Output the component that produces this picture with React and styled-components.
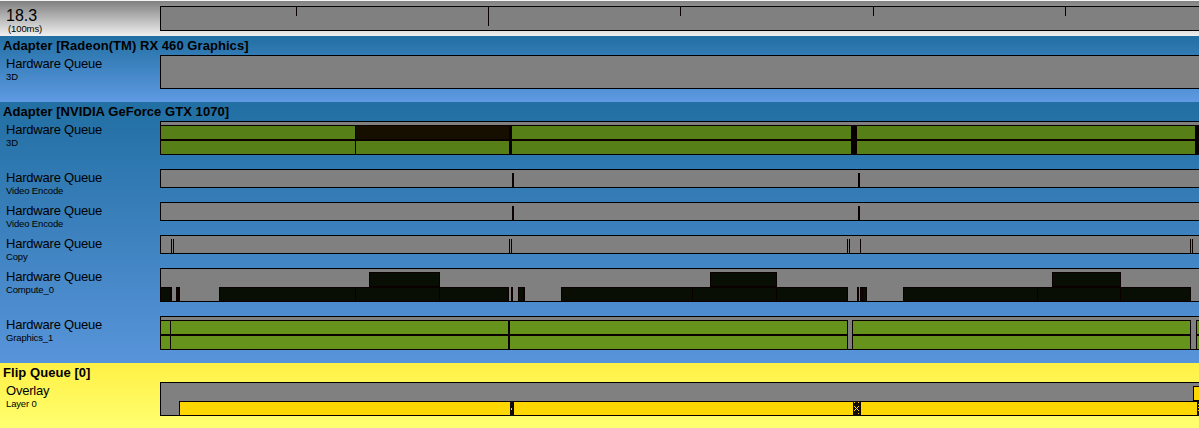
import React from "react";
import styled, { createGlobalStyle } from "styled-components";

const ORIGIN = 160;
const INK = "#0a0000";

const GlobalStyle = createGlobalStyle`
  * { box-sizing: border-box; }
  body {
    margin: 0;
    color: #000;
    font-family: "Liberation Sans", Arial, sans-serif;
    overflow: hidden;
  }
`;

const Viewer = styled.main`
  display: flex;
  flex-direction: column;
  width: 1199px;
  height: 428px;
  overflow: hidden;
`;

const Header = styled.header`
  display: flex;
  flex: none;
  height: 36px;
  padding-top: 5px;
  border-top: 1px solid #f4f4f4;
  background: linear-gradient(#808080, #f0f0f0);
`;

const HeaderLabel = styled.div`
  flex: none;
  width: ${ORIGIN}px;
  padding-left: 6px;
`;

const Time = styled.div`
  padding-top: 1px;
  font-size: 16px;
  line-height: 18px;
`;

const Scale = styled.div`
  margin-top: -1px;
  padding-left: 2px;
  font-size: 9.5px;
  line-height: 10px;
  letter-spacing: -0.1px;
`;

const Section = styled.section`
  flex: none;
  height: ${(p) => p.$height}px;
  overflow: hidden;
  background: ${(p) => p.$background};
`;

const SectionTitle = styled.h2`
  height: 19px;
  margin: 0;
  padding: 2px 0 0 3px;
  font-size: 13px;
  line-height: 15px;
  font-weight: bold;
  letter-spacing: 0.06px;
  white-space: nowrap;
`;

const Rows = styled.div`
  display: flex;
  flex-direction: column;
  gap: 14px;
`;

const Row = styled.div`
  display: flex;
  height: ${(p) => p.$height}px;
`;

const RowLabel = styled.div`
  flex: none;
  width: ${ORIGIN}px;
  padding-left: 6px;
  white-space: nowrap;
`;

const QueueName = styled.div`
  padding-top: 1px;
  font-size: 13px;
  line-height: 15px;
  letter-spacing: -0.21px;
`;

const EngineName = styled.div`
  font-size: 9.5px;
  line-height: 12px;
  letter-spacing: -0.15px;
`;

const Track = styled.div`
  display: flex;
  flex: 1;
  flex-direction: column;
  justify-content: ${(p) => (p.$ruler ? "flex-start" : "flex-end")};
  height: ${(p) => (p.$ruler ? "25px" : "100%")};
  min-width: 0;
  overflow: hidden;
  background: #808080;
  box-shadow: inset 1px 0 #000, inset 0 1px #000, inset 0 -1px #000;
`;

const Lane = styled.div`
  display: flex;
  flex: none;
  height: ${(p) => p.$height || 15}px;
`;

const Segment = styled.div`
  flex: none;
  width: ${(p) => p.$width}px;
  height: ${(p) => (p.$height ? p.$height + "px" : "100%")};
  margin-left: ${(p) => p.$offset}px;
  background: ${(p) => p.$fill};
  box-shadow: inset 0 0 0 1px ${INK};
`;

const Hatch = styled.svg`
  display: block;
  flex: none;
  margin-left: ${(p) => p.$offset}px;
`;

const GREEN = "#567f17";
const LIME = "#66931c";
const DARK = "#080e03";
const GOLD = "#ffd700";

const bars = (fill, ...ranges) => ranges.map(([start, end, own]) => ({ start, end, fill: own || fill }));

const hatches = {
  dot: [[1, 7, 1, 2]],
  cross: [
    [1, 1, 1, 1], [5, 1, 1, 1],
    [1, 5, 1, 1], [5, 5, 1, 1], [2, 6, 1, 1], [4, 6, 1, 1],
    [3, 7, 1, 1], [2, 8, 1, 1], [4, 8, 1, 1], [1, 9, 1, 1], [5, 9, 1, 1],
    [5, 12, 1, 1],
  ],
  rungs: [[1, 3, 1, 1], [1, 6, 1, 1], [1, 9, 1, 1]],
};

function Events({ items }) {
  let cursor = ORIGIN;
  return (
    <Lane>
      {items.map((item) => {
        const offset = item.start - cursor;
        const width = item.end - item.start;
        cursor = item.end;
        if (item.hatch) {
          return (
            <Hatch key={item.start} $offset={offset} width={width} height="15" shapeRendering="crispEdges">
              <rect width={width} height="15" fill="#110d02" />
              {hatches[item.hatch].map(([x, y, w, h]) => (
                <rect key={`${x}-${y}`} x={x} y={y} width={w} height={h} fill={GOLD} />
              ))}
            </Hatch>
          );
        }
        return <Segment key={item.start} $offset={offset} $width={width} $fill={item.fill} />;
      })}
    </Lane>
  );
}

const sections = [
  {
    title: "Adapter [Radeon(TM) RX 460 Graphics]",
    height: 66,
    background: "linear-gradient(#216fa3, #5f9ae2)",
    rows: [{ name: "Hardware Queue", engine: "3D", height: 34, lanes: [] }],
  },
  {
    title: "Adapter [NVIDIA GeForce GTX 1070]",
    height: 261,
    background: "linear-gradient(#216fa3, #5894da)",
    rows: [
      {
        name: "Hardware Queue",
        engine: "3D",
        height: 34,
        lanes: [
          bars(GREEN, [160, 356], [355, 510, "#160f00"], [509, 512, INK], [511, 852], [851, 857, INK], [856, 1196], [1195, 1200, INK]),
          bars(GREEN, [160, 356], [355, 510], [509, 512, INK], [511, 852], [851, 857, INK], [856, 1196], [1195, 1200, INK]),
        ],
      },
      { name: "Hardware Queue", engine: "Video Encode", height: 19, lanes: [bars(INK, [512, 514], [858, 860])] },
      { name: "Hardware Queue", engine: "Video Encode", height: 19, lanes: [bars(INK, [512, 514], [858, 860])] },
      {
        name: "Hardware Queue",
        engine: "Copy",
        height: 19,
        lanes: [bars(INK, [171, 172], [173, 174], [509, 510], [511, 512], [847, 848], [849, 850], [860, 861], [1190, 1191], [1192, 1193])],
      },
      {
        name: "Hardware Queue",
        engine: "Compute_0",
        height: 34,
        lanes: [
          bars(DARK, [369, 440], [710, 777], [1052, 1121]),
          bars(
            DARK,
            [160, 171], [170, 172, INK], [176, 180, INK], [219, 356], [355, 440], [439, 509], [511, 513, INK],
            [518, 524], [523, 525, INK], [561, 693], [692, 777], [776, 848], [857, 859, INK], [860, 863], [862, 867],
            [903, 1038], [1037, 1121], [1120, 1191]
          ),
        ],
      },
      {
        name: "Hardware Queue",
        engine: "Graphics_1",
        height: 34,
        lanes: [0, 1].map(() => bars(LIME, [160, 171], [170, 509], [508, 510, INK], [509, 848], [852, 1191], [1196, 1202])),
      },
    ],
  },
  {
    title: "Flip Queue [0]",
    height: 65,
    background: "linear-gradient(#fff045, #ffff70)",
    rows: [
      {
        name: "Overlay",
        engine: "Layer 0",
        height: 34,
        lanes: [
          bars(GOLD, [1193, 1202]),
          [
            ...bars(GOLD, [179, 511]),
            { start: 510, end: 514, hatch: "dot" },
            ...bars(GOLD, [513, 854]),
            { start: 853, end: 861, hatch: "cross" },
            ...bars(GOLD, [860, 1198]),
            { start: 1197, end: 1200, hatch: "rungs" },
          ],
        ],
      },
    ],
  },
];

const ticks = [[296, 10], [488, 20], [680, 10], [873, 10], [1065, 10]];

export default function App() {
  return (
    <Viewer>
      <GlobalStyle />
      <Header>
        <HeaderLabel>
          <Time>18.3</Time>
          <Scale>(100ms)</Scale>
        </HeaderLabel>
        <Track $ruler>
          <Lane $height={25}>
            {ticks.map(([x, length], i) => (
              <Segment
                key={x}
                $offset={x - (i ? ticks[i - 1][0] + 1 : ORIGIN)}
                $width={1}
                $height={length}
                $fill="#000"
              />
            ))}
          </Lane>
        </Track>
      </Header>
      {sections.map((section) => (
        <Section key={section.title} $height={section.height} $background={section.background}>
          <SectionTitle>{section.title}</SectionTitle>
          <Rows>
            {section.rows.map((row, i) => (
              <Row key={i} $height={row.height}>
                <RowLabel>
                  <QueueName>{row.name}</QueueName>
                  <EngineName>{row.engine}</EngineName>
                </RowLabel>
                <Track>
                  {row.lanes.map((items, lane) => (
                    <Events key={lane} items={items} />
                  ))}
                </Track>
              </Row>
            ))}
          </Rows>
        </Section>
      ))}
    </Viewer>
  );
}
